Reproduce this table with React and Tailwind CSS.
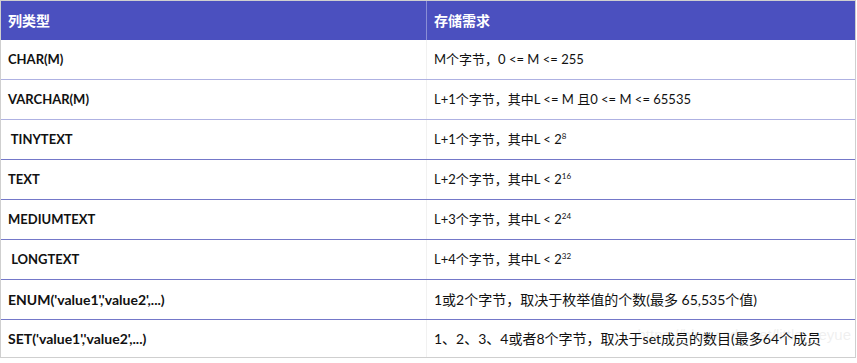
import React from 'react';

const rows = [
  { type: 'CHAR(M)', size: <>M个字节，0 &lt;= M &lt;= 255</>, line: 'border-[#aeb1e2]', text: 'text-[13px]' },
  { type: 'VARCHAR(M)', size: <>L+1个字节，其中L &lt;= M 且0 &lt;= M &lt;= 65535</>, line: 'border-[#aeb1e2]', text: 'text-[13px]' },
  { type: '\u00a0TINYTEXT', size: <>L+1个字节，其中L &lt; 2<sup className="text-[8px]">8</sup></>, line: 'border-[#7478c9]', text: 'text-[13px]' },
  { type: 'TEXT', size: <>L+2个字节，其中L &lt; 2<sup className="text-[8px]">16</sup></>, line: 'border-[#7478c9]', text: 'text-[13px]' },
  { type: 'MEDIUMTEXT', size: <>L+3个字节，其中L &lt; 2<sup className="text-[8px]">24</sup></>, line: 'border-[#7478c9]', text: 'text-[13px]' },
  { type: '\u00a0LONGTEXT', size: <>L+4个字节，其中L &lt; 2<sup className="text-[8px]">32</sup></>, line: 'border-[#7478c9]', text: 'text-[13px]' },
  { type: "ENUM('value1','value2',...)", size: <>1或2个字节，取决于枚举值的个数(最多 65,535个值)</>, line: 'border-[#7478c9]', text: 'text-[14px]' },
  { type: "SET('value1','value2',...)", size: <>1、2、3、4或者8个字节，取决于set成员的数目(最多64个成员</>, line: 'border-transparent', text: 'text-[14px]' },
];

const App = () => {
  return (
    <div className="w-[857px] h-[363px] bg-white font-['Lato','Noto_Sans_CJK_SC',sans-serif] text-[#111]">
      <div className="relative w-[856px] h-[358px] border border-[#cfcfcf] flex flex-col">
        <div className="flex h-[39px] bg-[#4b50bf] text-white font-bold text-[14px] shrink-0">
          <div className="w-[426px] flex items-center pl-[7px] border-r border-[#8a8ed6]">列类型</div>
          <div className="flex-1 flex items-center pl-[7px]">存储需求</div>
        </div>
        {rows.map((r, i) => (
          <div key={i} className={`flex ${i === rows.length - 1 ? 'flex-1' : 'h-[40px] border-b'} ${r.line} ${r.text} shrink-0`}>
            <div className="w-[426px] flex items-center pl-[7px] font-bold border-r border-[#f1f1f1] whitespace-pre">{r.type}</div>
            <div className="flex-1 flex items-center pl-[7px] whitespace-nowrap">{r.size}</div>
          </div>
        ))}
        <div className="absolute right-[4px] bottom-[11px] text-[15px] text-[#000] opacity-[0.06] font-['Liberation_Sans',sans-serif]">
          https://blog.csdn.net/little_yeyue
        </div>
      </div>
    </div>
  );
};

export default App;
